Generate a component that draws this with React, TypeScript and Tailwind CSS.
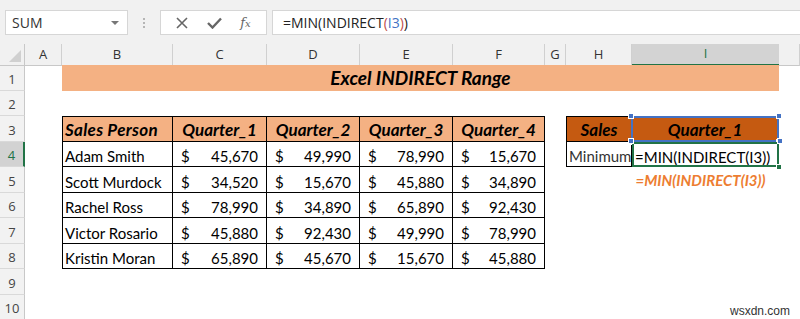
import React from "react";

const COLS =
  "grid grid-cols-[25px_37px_111px_94px_93px_93px_92px_21px_66px_147px_21px]";

const sales: [string, number, number, number, number][] = [
  ["Adam Smith", 45670, 49990, 78990, 15670],
  ["Scott Murdock", 34520, 15670, 45880, 34890],
  ["Rachel Ross", 78990, 34890, 65890, 92430],
  ["Victor Rosario", 45880, 92430, 49990, 78990],
  ["Kristin Moran", 65890, 45670, 15670, 45880],
];

const fmt = (n: number) => n.toLocaleString("en-US");

function RowHead({ n, active }: { n: number; active?: boolean }) {
  return (
    <div
      className={`flex items-end justify-center pb-[2px] leading-[18px] border-b border-[#d9d9d9] font-['Open_Sans',sans-serif] text-[13px] ${
        active
          ? "bg-[#d2d2d2] text-[#217346] border-r-2 border-r-[#217346]"
          : "bg-[#f2f2f2] text-[#444] border-r border-r-[#c8c8c8]"
      }`}
    >
      {n}
    </div>
  );
}

function Money({ v }: { v: number }) {
  return (
    <div className="flex items-end justify-between border-r border-b border-black pl-[8px] pr-[8px] pb-[1px] leading-[18px]">
      <span>$</span>
      <span>{fmt(v)}</span>
    </div>
  );
}

function Handle({ className }: { className: string }) {
  return (
    <span
      className={`absolute h-[6px] w-[6px] bg-[#4472c4] border border-white ${className}`}
    />
  );
}

export default function App() {
  const headers = ["", "A", "B", "C", "D", "E", "F", "G", "H", "I", ""];

  return (
    <div className="w-[800px] h-[319px] overflow-hidden bg-white font-['Lato',sans-serif] text-[15px] text-black">
      {/* Formula bar */}
      <div className="h-[44px] bg-[#f1f1f1] flex items-start pt-[10px] font-['Open_Sans',sans-serif]">
        <div className="ml-[5px] w-[123px] h-[25px] bg-white border border-[#d6d6d6] flex items-center justify-between pl-[6px] pr-[8px] text-[14px] text-[#333]">
          <span>SUM</span>
          <span className="w-0 h-0 border-l-[4px] border-r-[4px] border-t-[4px] border-l-transparent border-r-transparent border-t-[#777]" />
        </div>
        <div className="w-[32px] h-[25px] flex flex-col items-center justify-center gap-[2px]">
          <span className="w-[2px] h-[2px] bg-[#b5b5b5]" />
          <span className="w-[2px] h-[2px] bg-[#b5b5b5]" />
          <span className="w-[2px] h-[2px] bg-[#b5b5b5]" />
        </div>
        <div className="w-[107px] h-[25px] bg-white border border-[#d6d6d6] flex items-center justify-around px-[6px] text-[#666]">
          <svg width="12" height="12" viewBox="0 0 12 12">
            <path d="M1 1 L11 11 M11 1 L1 11" stroke="#666" strokeWidth="1.6" />
          </svg>
          <svg width="15" height="12" viewBox="0 0 15 12">
            <path d="M1 6 L5.5 10.5 L14 1.5" stroke="#666" strokeWidth="2.4" fill="none" />
          </svg>
          <span className="font-['DejaVu_Serif',serif] italic text-[13px] leading-none">
            f<span className="text-[10px]">x</span>
          </span>
        </div>
        <div className="ml-[5px] flex-1 h-[25px] bg-white border border-[#d6d6d6] border-r-0 flex items-center pl-[10px] text-[14px] text-[#222]">
          =MIN(INDIRECT<span className="text-[#c0504d]">(</span>
          <span className="text-[#4472c4]">I3</span>
          <span className="text-[#c0504d]">)</span>)
        </div>
      </div>

      {/* Column headers */}
      <div className={`${COLS} h-[21px] bg-[#f1f1f1] font-['Open_Sans',sans-serif] text-[13px] text-[#333]`}>
        {headers.map((h, i) =>
          i === 0 ? (
            <div key={i} className="relative border-r border-b border-[#c8c8c8]">
              <span className="absolute right-[3px] bottom-[3px] w-0 h-0 [border-bottom:12px_solid_#d0d0d0] [border-left:12px_solid_transparent]" />
            </div>
          ) : h === "I" ? (
            <div key={i} className="flex items-center justify-center bg-[#d3d3d3] border-b-2 border-[#217346] text-[#217346]">
              {h}
            </div>
          ) : (
            <div key={i} className="flex items-center justify-center border-r border-[#d0d0d0] border-b border-b-[#c8c8c8]">
              {h}
            </div>
          )
        )}
      </div>

      {/* Sheet */}
      <div className={`${COLS} auto-rows-[25.5px]`}>
        {/* Row 1 */}
        <RowHead n={1} />
        <div />
        <div className="col-span-8 bg-[#f4b183] flex items-center justify-center font-bold italic text-[19px]">
          Excel INDIRECT Range
        </div>
        <div />

        {/* Row 2 */}
        <RowHead n={2} />
        <div className="col-span-10" />

        {/* Row 3 */}
        <RowHead n={3} />
        <div />
        {["Sales Person", "Quarter_1", "Quarter_2", "Quarter_3", "Quarter_4"].map((t, i) => (
          <div
            key={t}
            className={`bg-[#f4b183] border-t border-r border-b border-black font-bold italic text-[17px] leading-[20px] flex items-end pb-[1px] ${
              i === 0 ? "border-l justify-start pl-[2px] tracking-[0.3px]" : "justify-center"
            }`}
          >
            {t}
          </div>
        ))}
        <div />
        <div className="bg-[#c55a11] border border-black font-bold italic text-[17px] leading-[20px] flex items-end justify-center pb-[1px]">
          Sales
        </div>
        <div className="relative bg-[#c55a11] border-t border-r border-b border-black font-bold italic text-[17px] leading-[20px] flex items-end justify-center pb-[1px]">
          Quarter_1
          <div className="absolute -inset-[1px] border-2 border-[#4472c4]" />
          <Handle className="-left-[4px] -top-[4px]" />
          <Handle className="-right-[4px] -top-[4px]" />
          <Handle className="-left-[4px] -bottom-[4px]" />
          <Handle className="-right-[4px] -bottom-[4px]" />
        </div>
        <div />

        {/* Rows 4-8 */}
        {sales.map((r, idx) => (
          <React.Fragment key={r[0]}>
            <RowHead n={idx + 4} active={idx === 0} />
            <div />
            <div className="border-l border-r border-b border-black flex items-end pl-[2px] pb-[1px] leading-[18px]">
              {r[0]}
            </div>
            <Money v={r[1]} />
            <Money v={r[2]} />
            <Money v={r[3]} />
            <Money v={r[4]} />
            <div />
            {idx === 0 ? (
              <>
                <div className="border-l border-r border-b border-black flex items-end pl-[2px] pb-[1px] leading-[18px] text-[#333]">
                  Minimum
                </div>
                <div className="relative flex items-end pl-[3px] pb-[1px] leading-[18px]">
                  =MIN(INDIRECT(I3))
                  <div className="absolute inset-0 border-2 border-[#217346]" />
                  <span className="absolute -right-[3px] -bottom-[3px] h-[6px] w-[6px] bg-[#217346] border border-white" />
                  <Handle className="-left-[4px] -top-[4px]" />
                  <Handle className="-right-[4px] -top-[4px]" />
                </div>
              </>
            ) : idx === 1 ? (
              <>
                <div />
                <div className="flex items-center justify-center pr-[10px] text-[#ed7d31] font-bold italic">
                  =MIN(INDIRECT(I3))
                </div>
              </>
            ) : (
              <>
                <div />
                <div />
              </>
            )}
            <div />
          </React.Fragment>
        ))}

        {/* Rows 9-10 */}
        <RowHead n={9} />
        <div className="col-span-10" />
        <RowHead n={10} />
        <div className="col-span-10 relative">
          <span className="absolute right-[10px] top-[7px] font-['Liberation_Sans',sans-serif] text-[12px] text-[#333]">
            wsxdn.com
          </span>
        </div>
      </div>
    </div>
  );
}
